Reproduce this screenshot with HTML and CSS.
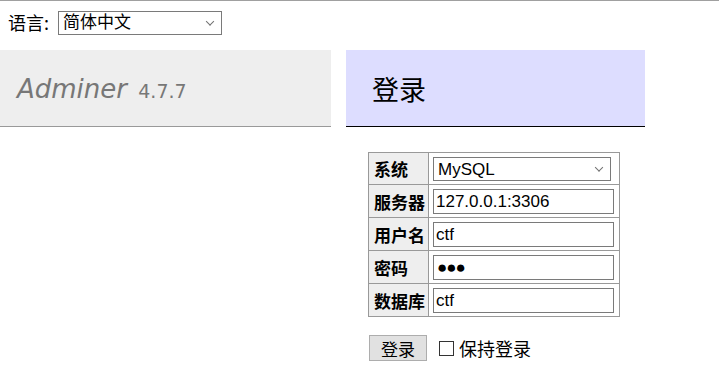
FILE: index.html
```html
<!DOCTYPE html>
<html lang="zh">
<head>
    <meta charset="UTF-8">
    <title>登录 - Adminer</title>
    <link rel="stylesheet" href="styles.css">
</head>
<body>
    <div class="lang">
        <span class="lang-label">语言:</span>
        <span class="select-wrap">
            <select name="lang" class="lang-select">
                <option value="en">English</option>
                <option value="zh" selected>简体中文</option>
                <option value="zh-tw">繁體中文</option>
            </select>
        </span>
    </div>

    <div class="layout">
        <div class="menu">
            <h1><a href="#">Adminer</a> <span class="version">4.7.7</span></h1>
        </div>

        <div class="content">
            <h2>登录</h2>
            <form class="login-form">
                <table class="login-table">
                    <tr>
                        <th>系统</th>
                        <td>
                            <span class="select-wrap">
                                <select name="driver" class="driver-select">
                                    <option selected>MySQL</option>
                                    <option>SQLite 3</option>
                                    <option>PostgreSQL</option>
                                </select>
                            </span>
                        </td>
                    </tr>
                    <tr>
                        <th>服务器</th>
                        <td><input type="text" name="server" value="127.0.0.1:3306"></td>
                    </tr>
                    <tr>
                        <th>用户名</th>
                        <td><input type="text" name="username" value="ctf"></td>
                    </tr>
                    <tr>
                        <th>密码</th>
                        <td><input type="text" class="password" name="password" value="●●●" readonly></td>
                    </tr>
                    <tr>
                        <th>数据库</th>
                        <td><input type="text" name="db" value="ctf"></td>
                    </tr>
                </table>
                <div class="actions">
                    <button type="submit">登录</button>
                    <label><input type="checkbox" name="permanent">保持登录</label>
                </div>
            </form>
        </div>
    </div>
</body>
</html>
```

FILE: styles.css
```css
body {
    margin: 0;
    border-top: 1px solid #a0a0a0;
    background: #fff;
    color: #000;
    font: 17px/1.25 "DejaVu Sans", "Noto Sans CJK SC", sans-serif;
}

select,
input,
button {
    font-family: "Liberation Sans", "Noto Sans CJK SC", sans-serif;
    font-size: 17px;
    color: #000;
}

select {
    appearance: none;
    box-sizing: border-box;
    border: 1px solid #7a7a7a;
    border-radius: 0;
    background: #fff;
}

.select-wrap {
    position: relative;
    display: inline-block;
}

.select-wrap::after {
    content: "";
    position: absolute;
    right: 9px;
    top: 50%;
    width: 5px;
    height: 5px;
    border-right: 1px solid #707070;
    border-bottom: 1px solid #707070;
    transform: translateY(-75%) rotate(45deg);
    pointer-events: none;
}

.lang {
    display: flex;
    align-items: center;
    height: 25px;
    padding: 9px 8px 0;
}

.lang-label {
    flex: none;
    width: 50px;
    font-family: "Noto Sans CJK SC", sans-serif;
    font-size: 18px;
}

.lang-select {
    display: block;
    width: 164px;
    height: 24px;
    padding: 0 4px;
}

.layout {
    display: flex;
    align-items: flex-start;
    margin-top: 15px;
}

.menu {
    flex: none;
    width: 331px;
}

.menu h1 {
    margin: 0;
    height: 32px;
    padding: 23px 17px 21px;
    line-height: 32px;
    background: #eee;
    border-bottom: 1px solid #999;
    font-size: 26px;
    font-weight: normal;
    font-style: italic;
    white-space: nowrap;
}

.menu h1 a {
    color: #777;
    text-decoration: none;
}

.version {
    margin-left: 3px;
    color: #777;
    font-size: 19px;
    font-style: normal;
}

.content {
    margin-left: 15px;
}

.content h2 {
    width: 273px;
    height: 32px;
    margin: 0;
    padding: 23px 0 21px 26px;
    line-height: 32px;
    background: #ddf;
    border-bottom: 1px solid #000;
    font-family: "Noto Sans CJK SC", sans-serif;
    font-size: 27px;
    font-weight: normal;
}

.login-form {
    margin: 25px 0 0 22px;
}

.login-table {
    border-collapse: collapse;
    border: 1px solid #999;
}

.login-table th,
.login-table td {
    border: 1px solid #999;
    padding: 4px 5px 3px 4px;
}

.login-table th {
    padding: 4px 3px 3px 5px;
    background: #eee;
    text-align: left;
    white-space: nowrap;
    font-family: "Noto Sans CJK SC", sans-serif;
}

.login-table input {
    display: block;
    box-sizing: border-box;
    width: 181px;
    height: 25px;
    padding: 0 2px;
    border: 1px solid #7a7a7a;
    border-radius: 0;
}

.login-table .password {
    padding-left: 3px;
    letter-spacing: -1px;
}

.driver-select {
    display: block;
    width: 178px;
    height: 24px;
    padding: 0 4px;
}

.actions {
    display: flex;
    align-items: center;
    margin-top: 18px;
}

.actions button {
    height: 26px;
    padding: 0 11px;
    margin-left: 1px;
    border: 1px solid #adadad;
    border-radius: 0;
    background: #e1e1e1;
    font-family: "Noto Sans CJK SC", sans-serif;
    line-height: 1;
}

.actions label {
    display: flex;
    align-items: center;
    margin-left: 12px;
    font-family: "Noto Sans CJK SC", sans-serif;
    font-size: 18px;
}

.actions input[type="checkbox"] {
    appearance: none;
    width: 15px;
    height: 15px;
    margin: 0 5px 0 0;
    border: 1px solid #333;
    background: #fff;
}
```
